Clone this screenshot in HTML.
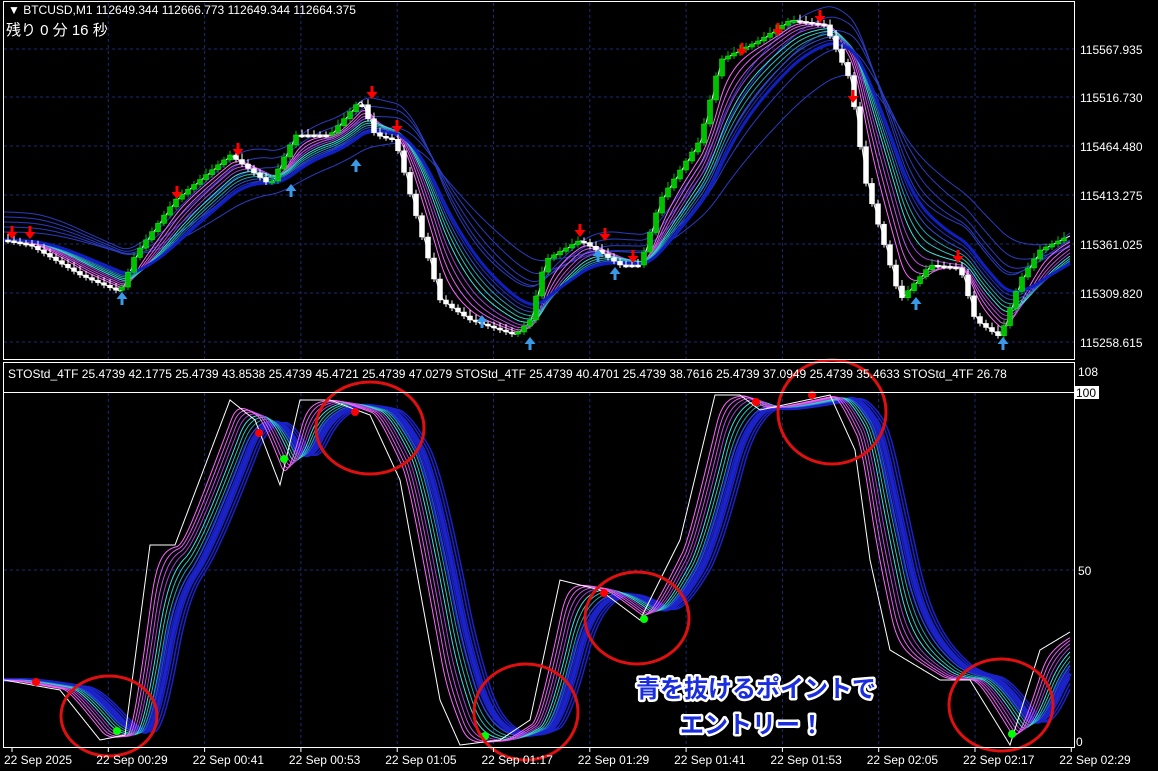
<!DOCTYPE html>
<html><head><meta charset="utf-8">
<style>
html,body{margin:0;padding:0;background:#000;width:1158px;height:771px;overflow:hidden}
svg{display:block}
text{font-family:"Liberation Sans","Noto Sans CJK JP",sans-serif}
</style></head>
<body>
<svg id="s" width="1158" height="771" xmlns="http://www.w3.org/2000/svg">
<rect width="1158" height="771" fill="#000"/>
<g id="grid" stroke="#1c2a7a" stroke-dasharray="3,3" stroke-width="1"></g>
<g id="gtop"></g>
<g id="gbot"></g>
<rect x="3.5" y="1.5" width="1071" height="358" fill="none" stroke="#fff"/>
<rect x="3.5" y="362.5" width="1071" height="385" fill="none" stroke="#fff"/>
<line x1="4" y1="392.5" x2="1074" y2="392.5" stroke="#fff"/>
<text x="8" y="14" fill="#fff" font-size="12">▼ BTCUSD,M1  112649.344 112666.773 112649.344 112664.375</text>
<text x="6" y="35" fill="#fff" font-size="15" font-family="'Noto Sans CJK JP',sans-serif" xml:space="preserve">残り 0 分 16 秒</text>
<text x="8" y="378" fill="#fff" font-size="12">STOStd_4TF 25.4739 42.1775 25.4739 43.8538 25.4739 45.4721 25.4739 47.0279  STOStd_4TF 25.4739 40.4701 25.4739 38.7616 25.4739 37.0949 25.4739 35.4633  STOStd_4TF 26.78</text>
<g id="axis" fill="#fff" font-size="12"></g>
<g id="ann" font-size="24" font-weight="bold" font-family="'Noto Sans CJK JP',sans-serif" text-anchor="middle" fill="#1a2ee0" stroke="#fff" stroke-width="5" paint-order="stroke" stroke-linejoin="round">
<text x="756" y="697">青を抜けるポイントで</text>
<text x="752" y="733">エントリー！</text>
</g>
</svg>
<script>
(function(){
var NS="http://www.w3.org/2000/svg";
function el(p,t,a){var e=document.createElementNS(NS,t);for(var k in a)e.setAttribute(k,a[k]);p.appendChild(e);return e;}
function interp(pts){var a=[];for(var x=4;x<=1070;x++){var f=false;for(var i=0;i<pts.length-1;i++){if(x>=pts[i][0]&&x<=pts[i+1][0]){var t=(x-pts[i][0])/(pts[i+1][0]-pts[i][0]);a.push(pts[i][1]+(pts[i+1][1]-pts[i][1])*t);f=true;break;}}if(!f)a.push(pts[pts.length-1][1]);}return a;}
function ema(a,al){var r=[],v=a[0];for(var i=0;i<a.length;i++){v=v+(a[i]-v)*al;r.push(v);}return r;}
function shift(a,n){var r=[];for(var i=0;i<a.length;i++)r.push(a[Math.max(0,i-n)]);return r;}
function pl(g,a,col,w,off){var s="";for(var i=0;i<a.length;i++)s+=(i+4)+","+(a[i]+(off||0)).toFixed(1)+" ";el(g,"polyline",{points:s,fill:"none",stroke:col,"stroke-width":w||1});}
var grid=document.getElementById("grid"),ax=document.getElementById("axis");
var labs=["22 Sep 2025","22 Sep 00:29","22 Sep 00:41","22 Sep 00:53","22 Sep 01:05","22 Sep 01:17","22 Sep 01:29","22 Sep 01:41","22 Sep 01:53","22 Sep 02:05","22 Sep 02:17","22 Sep 02:29"];
var t;
for(var i=0;i<12;i++){var x=6+i*96.3;if(i>0&&i<11){el(grid,"line",{x1:x+6,y1:3,x2:x+6,y2:359});el(grid,"line",{x1:x+6,y1:393,x2:x+6,y2:747});}
t=el(ax,"text",{x:i==0?4:x-6,y:764});t.textContent=labs[i];el(ax,"line",{x1:x+6,y1:747,x2:x+6,y2:752,stroke:"#fff"});}
var py=[49,97,146,195,244,293,342],pv=["115567.935","115516.730","115464.480","115413.275","115361.025","115309.820","115258.615"];
for(i=0;i<7;i++){el(grid,"line",{x1:4,y1:py[i],x2:1074,y2:py[i]});t=el(ax,"text",{x:1080,y:py[i]+5});t.textContent=pv[i];}
el(grid,"line",{x1:4,y1:570,x2:1074,y2:570});
t=el(ax,"text",{x:1078,y:376});t.textContent="108";
el(ax,"rect",{x:1075,y:386,width:24,height:13,fill:"#fff"});t=el(ax,"text",{x:1076,y:397,fill:"#000"});t.textContent="100";
t=el(ax,"text",{x:1078,y:575});t.textContent="50";t=el(ax,"text",{x:1076,y:746});t.textContent="0";
var cols=["#ffffff","#ff66ff","#e060f0","#c050e0","#a040d0","#40e0e0","#30c0c0","#20a0b0","#3050d0","#2030c0","#1020c0"];
var tp=document.getElementById("gtop");
var P=[[4,240],[30,245],[80,275],[120,292],[135,255],[175,200],[230,155],[270,185],[295,135],[330,135],[360,100],[375,135],[395,140],[420,230],[440,300],[470,320],[515,335],[530,320],[545,260],[580,240],[620,265],[640,265],[660,200],[700,140],[720,60],[760,40],[790,20],[825,25],[850,80],[865,180],[890,265],[900,300],[930,265],[960,268],[975,320],[1000,337],[1020,280],[1040,250],[1070,235]];
var pa=interp(P);
for(var k=0;k<5;k++){pl(tp,ema(pa,0.01+k*0.004),"#2a3cc0",1,-8-k*5);}
for(k=0;k<cols.length;k++){var al=k==0?0.35:0.12/(1+k*0.5);pl(tp,ema(pa,al),cols[k],k==cols.length-1?3:1);}
for(x=8;x<1068;x+=6){var ii=x-4,o=pa[Math.max(0,ii-6)],c=pa[ii];var j=((x*37)%11)-5;var hi=Math.min(o,c)-3-Math.abs(j)*0.6,lo=Math.max(o,c)+3;var up=c<o;
el(tp,"line",{x1:x,y1:hi,x2:x,y2:lo,stroke:up?"#00c000":"#fff"});
el(tp,"rect",{x:x-2.5,y:Math.min(o,c),width:5,height:Math.max(2,Math.abs(c-o)),fill:up?"#00c000":"#fff",stroke:up?"#0f0":"#fff","stroke-width":0.5});}
var dn=[[12,238],[30,238],[177,198],[238,155],[372,98],[397,132],[580,236],[605,240],[633,262],[742,55],[778,35],[820,22],[853,102],[958,262]],upA=[[122,293],[291,185],[356,160],[482,316],[530,338],[598,250],[615,268],[916,298],[1003,338]];
dn.forEach(function(p){el(tp,"path",{d:"M"+(p[0]-1.5)+" "+(p[1]-12)+"h3v6h4l-5.5 7l-5.5-7h4z",fill:"#f00"});});
upA.forEach(function(p){el(tp,"path",{d:"M"+(p[0]-1.5)+" "+(p[1]+12)+"h3v-6h4l-5.5-7l-5.5 7h4z",fill:"#3a9ae8"});});
var bt=document.getElementById("gbot");
var S=[[4,680],[60,690],[100,740],[125,735],[150,545],[175,545],[230,400],[255,420],[280,485],[300,400],[330,400],[370,415],[400,480],[440,700],[460,745],[500,740],[530,720],[560,580],[600,590],[640,620],[680,540],[715,395],[740,395],[760,410],[830,395],[855,450],[870,560],[890,650],[940,680],[970,680],[1010,745],[1040,650],[1070,632]];
var sa=interp(S);
for(k=0;k<6;k++)pl(bt,ema(shift(sa,14+k*3),0.05),"#1a22c8",k==2?4:1.5);
for(k=cols.length-3;k>=0;k--){var arr=k==0?sa:ema(shift(sa,k*2),0.16/(1+k*0.25));pl(bt,arr,cols[k],1);}
[[36,682],[259,433],[355,412],[604,593],[756,402],[812,395]].forEach(function(p){el(bt,"circle",{cx:p[0],cy:p[1],r:4,fill:"#f00"});});
[[117,731],[284,459],[485,736],[644,619],[1012,734]].forEach(function(p){el(bt,"circle",{cx:p[0],cy:p[1],r:4,fill:"#0f0"});});
[[109,716,48,40],[370,428,54,46],[526,712,52,48],[637,618,52,46],[832,412,54,52],[1001,705,52,46]].forEach(function(c){el(bt,"ellipse",{cx:c[0],cy:c[1],rx:c[2],ry:c[3],fill:"none",stroke:"#e01010","stroke-width":3});});
})();
</script>
</body></html>
